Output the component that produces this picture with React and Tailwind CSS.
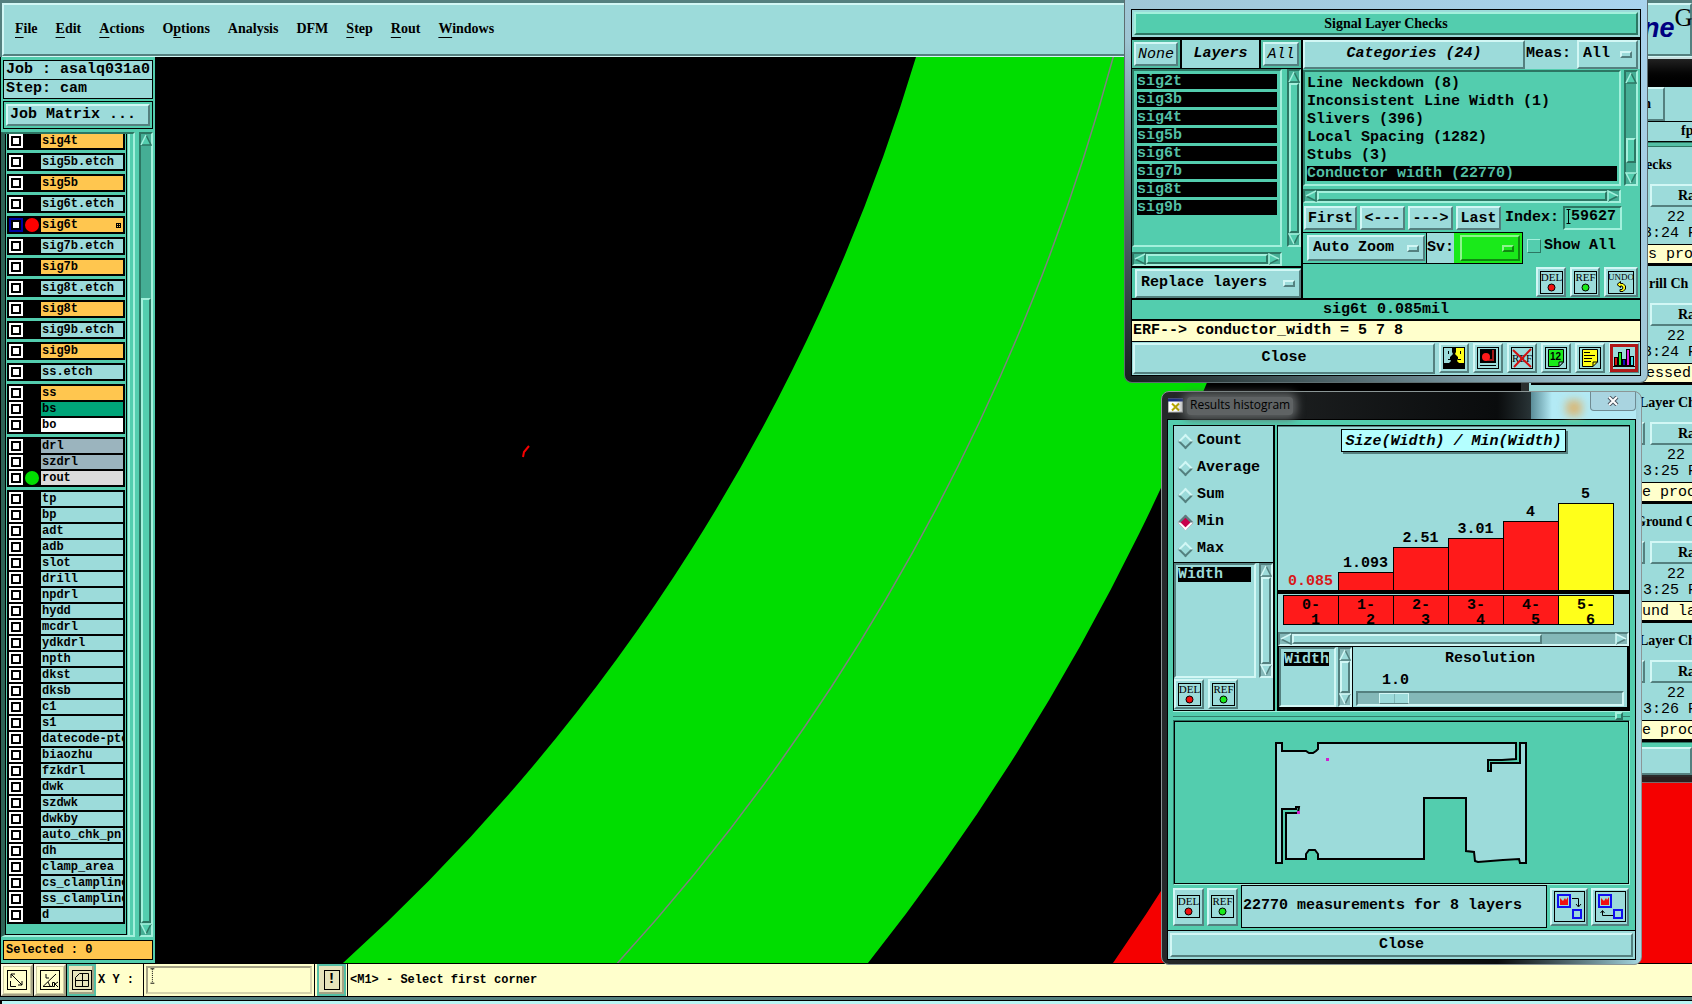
import React, { useState } from "react";
import clsx from "clsx";

const MONO = "font-['Liberation_Mono',monospace]";
const SERIF = "font-['Liberation_Serif',serif]";

const RAISED = "border-2 border-t-[#d2f7f5] border-l-[#d2f7f5] border-r-[#54807f] border-b-[#54807f] bg-[#9cdbda]";
const RAISED_TEAL = "border-2 border-t-[#a3f0dc] border-l-[#a3f0dc] border-r-[#2c7663] border-b-[#2c7663] bg-[#53cdae]";
const SUNK = "border-2 border-t-[#54807f] border-l-[#54807f] border-r-[#d2f7f5] border-b-[#d2f7f5] bg-[#9cdbda]";
const SUNK_TEAL = "border-2 border-t-[#2c7663] border-l-[#2c7663] border-r-[#a3f0dc] border-b-[#a3f0dc] bg-[#53cdae]";

const menus = [
  { key: "F", rest: "ile" },
  { key: "E", rest: "dit" },
  { key: "A", rest: "ctions" },
  { before: "O", key: "p", rest: "tions" },
  { rest: "Analysis" },
  { rest: "DFM" },
  { key: "S", rest: "tep" },
  { key: "R", rest: "out" },
  { key: "W", rest: "indows" },
];

const SIGNAL = "bg-[#ffc64f]";
const PLAIN = "bg-[#9cdbda]";

const layerGroups = [
  [{ name: "sig4t", bg: SIGNAL }],
  [{ name: "sig5b.etch", bg: PLAIN }],
  [{ name: "sig5b", bg: SIGNAL }],
  [{ name: "sig6t.etch", bg: PLAIN }],
  [{ name: "sig6t", bg: SIGNAL, dot: "bg-[#ff0000]", active: true }],
  [{ name: "sig7b.etch", bg: PLAIN }],
  [{ name: "sig7b", bg: SIGNAL }],
  [{ name: "sig8t.etch", bg: PLAIN }],
  [{ name: "sig8t", bg: SIGNAL }],
  [{ name: "sig9b.etch", bg: PLAIN }],
  [{ name: "sig9b", bg: SIGNAL }],
  [{ name: "ss.etch", bg: PLAIN }],
  [
    { name: "ss", bg: SIGNAL },
    { name: "bs", bg: "bg-[#00a479]" },
    { name: "bo", bg: "bg-white" },
  ],
  [
    { name: "drl", bg: "bg-[#9bb4be]" },
    { name: "szdrl", bg: "bg-[#9bb4be]" },
    { name: "rout", bg: "bg-[#dcdcdc]", dot: "bg-[#00dd00]" },
  ],
  [
    "tp", "bp", "adt", "adb", "slot", "drill", "npdrl", "hydd", "mcdrl", "ydkdrl", "npth", "dkst", "dksb", "c1", "s1",
    "datecode-pto", "biaozhu", "fzkdrl", "dwk", "szdwk", "dwkby", "auto_chk_pnl", "dh", "clamp_area", "cs_clampline",
    "ss_clampline", "d",
  ].map((name) => ({ name, bg: PLAIN })),
];

const checkLayers = ["sig2t", "sig3b", "sig4t", "sig5b", "sig6t", "sig7b", "sig8t", "sig9b"];

const categories = [
  "Line Neckdown (8)",
  "Inconsistent Line Width (1)",
  "Slivers (396)",
  "Local Spacing (1282)",
  "Stubs (3)",
  "Conductor width (22770)",
];

const bars = [
  { value: "0.085", height: 0, from: "0", to: "1", color: "bg-[#ff1a1a]" },
  { value: "1.093", height: 18, from: "1", to: "2", color: "bg-[#ff1a1a]" },
  { value: "2.51", height: 43, from: "2", to: "3", color: "bg-[#ff1a1a]" },
  { value: "3.01", height: 52, from: "3", to: "4", color: "bg-[#ff1a1a]" },
  { value: "4", height: 69, from: "4", to: "5", color: "bg-[#ff1a1a]" },
  { value: "5", height: 87, from: "5", to: "6", color: "bg-[#ffff1a]" },
];

const reports = [
  { title: "ecks", titlePad: "pl-[115px]", time: "3:24 P", text: "s proc", textPad: "pl-[117px]" },
  { title: "rill Ch", titlePad: "pl-[118px]", time: "3:24 P", text: "essed", textPad: "pl-[115px]" },
  { title: "Layer Ch", titlePad: "pl-[108px]", time: "3:25 P", text: "e proc", textPad: "pl-[111px]" },
  { title: "Ground C", titlePad: "pl-[104px]", time: "3:25 P", text: "und la", textPad: "pl-[111px]" },
  { title: "Layer Ch", titlePad: "pl-[108px]", time: "3:26 P", text: "e proc", textPad: "pl-[111px]" },
];

/* ---------- small parts ---------- */

const Arrow = ({ dir, teal }) => {
  const light = teal ? "#a3f0dc" : "#d2f7f5";
  const dark = teal ? "#2c7663" : "#54807f";
  const turn = { up: 0, right: 90, down: 180, left: 270 }[dir];
  const edges = {
    up: ["M1 11 L6 1", "M6 1 L11 11 H1"],
    left: ["M11 11 L6 1", "M6 1 L1 11 H11"],
    down: ["M6 1 L11 11 H1", "M1 11 L6 1"],
    right: ["M6 1 L1 11 H11", "M11 11 L6 1"],
  }[dir];
  return (
    <svg viewBox="0 0 12 12" className="size-3 shrink-0" fill="none" strokeWidth="1.5" aria-hidden="true">
      <g transform={`rotate(${turn} 6 6)`}>
        <path d="M6 1 L11 11 H1 Z" fill={teal ? "#53cdae" : "#9cdbda"} />
        <path d={edges[1]} stroke={dark} />
        <path d={edges[0]} stroke={light} />
      </g>
    </svg>
  );
};

const ScrollBar = ({ horizontal, teal, before = 0, thumb = 1, after = 0, className }) => (
  <div
    className={clsx(
      "flex items-center shrink-0",
      horizontal ? "h-[14px]" : "w-[14px] flex-col",
      teal
        ? "border-2 border-t-[#2c7663] border-l-[#2c7663] border-r-[#a3f0dc] border-b-[#a3f0dc] bg-[#45ae95]"
        : "border-2 border-t-[#54807f] border-l-[#54807f] border-r-[#d2f7f5] border-b-[#d2f7f5] bg-[#84b8b8]",
      className
    )}
  >
    <Arrow dir={horizontal ? "left" : "up"} teal={teal} />
    <div className={clsx("flex flex-1 self-stretch min-h-0", horizontal ? "flex-row" : "flex-col")}>
      <div className="basis-0" style={{ flexGrow: before }} />
      <div className={clsx("basis-0", teal ? RAISED_TEAL : RAISED)} style={{ flexGrow: thumb }} />
      <div className="basis-0" style={{ flexGrow: after }} />
    </div>
    <Arrow dir={horizontal ? "right" : "down"} teal={teal} />
  </div>
);

const Dropdown = ({ label, options, className, green }) => (
  <div
    className={clsx(
      "relative flex items-center",
      green
        ? "border-2 border-t-[#8df58d] border-l-[#8df58d] border-r-[#0f8a0f] border-b-[#0f8a0f] bg-[#1aea1a]"
        : RAISED,
      className
    )}
  >
    <select aria-label={label} className="w-full h-full appearance-none bg-transparent pl-1 text-[15px] font-bold outline-none">
      {options.map((opt) => (
        <option key={opt}>{opt}</option>
      ))}
    </select>
    <span
      className={clsx(
        "absolute right-1 w-3 h-[7px] pointer-events-none border-2",
        green
          ? "border-t-[#8df58d] border-l-[#8df58d] border-r-[#0f8a0f] border-b-[#0f8a0f]"
          : "border-t-[#d2f7f5] border-l-[#d2f7f5] border-r-[#54807f] border-b-[#54807f]"
      )}
    />
  </div>
);

const MarkIcon = ({ text, color }) => (
  <svg viewBox="0 0 23 23" className="size-[23px]" aria-hidden="true">
    <rect x="0.5" y="0.5" width="22" height="22" fill="none" stroke="#000" />
    <text x="11.5" y="10" textAnchor="middle" fontSize="11" fontWeight="400" fontFamily="Liberation Serif, serif">
      {text}
    </text>
    <circle cx="11.5" cy="16.5" r="3.5" fill={color} stroke="#000" />
  </svg>
);

const UndoIcon = () => (
  <svg viewBox="0 0 26 23" className="w-[26px] h-[23px]" aria-hidden="true">
    <rect x="0.5" y="0.5" width="25" height="22" fill="none" stroke="#000" />
    <text x="13" y="9" textAnchor="middle" fontSize="9" fontWeight="400" fontFamily="Liberation Serif, serif">
      UNDO
    </text>
    <path d="M9 13.5 L12.5 10.5 V12.5 H15 L17.5 15 V18 L15 20.5 H12 V18.5 H14 L15 17 L14 15 H12.5 V16.5 Z" fill="#ffff1a" stroke="#000" />
  </svg>
);

const IconButton = ({ label, className, children }) => (
  <button type="button" aria-label={label} className={clsx("flex items-center justify-center shrink-0", RAISED, className)}>
    {children}
  </button>
);

/* ---------- main window ---------- */

const MenuBar = () => (
  <header className="flex h-[57px] shrink-0 flex-col bg-[#54807f] pt-[3px]">
    <div className="ml-[2px] flex flex-1 items-center border-2 border-t-[#d2f7f5] border-l-[#d2f7f5] border-r-[#54807f] border-b-[#54807f] bg-[#9cdbda]">
      <nav className={clsx("flex gap-[18px] pb-[2px] pl-[11px]", SERIF)}>
        {menus.map(({ before, key, rest }) => (
          <button type="button" key={rest} className="text-sm font-bold leading-5">
            {before}
            {key && <span className="underline underline-offset-4">{key}</span>}
            {rest}
          </button>
        ))}
      </nav>
      <div className="-mr-[2px] ml-auto flex w-[49px] items-start overflow-hidden pb-2 whitespace-nowrap">
        <span className="pt-1 font-['Liberation_Sans',sans-serif] text-[27px] leading-8 font-bold italic text-[#000080]">ne</span>
        <span className={clsx("text-[25px] leading-5", SERIF)}>G</span>
      </div>
    </div>
    <div className="ml-[2px] h-[1px] bg-[#d2f7f5]" />
  </header>
);

const LayerRow = ({ name, bg, dot, active }) => (
  <li className="flex h-[14px]">
    <input
      type="checkbox"
      aria-label={name}
      className={clsx(
        "size-[14px] shrink-0 appearance-none border-2 bg-white shadow-[inset_0_0_0_2px_#000]",
        active ? "border-[#0000a0]" : "border-white"
      )}
    />
    <span className="flex w-[18px] shrink-0 items-center justify-center">
      {dot && <span className={clsx("size-[14px] rounded-full", dot)} />}
    </span>
    <button
      type="button"
      className={clsx("flex min-w-0 flex-1 items-center overflow-hidden pl-[1px] text-xs leading-[14px] font-bold whitespace-nowrap", bg)}
    >
      {name}
      {active && (
        <svg viewBox="0 0 5 5" className="mr-[2px] ml-auto size-[5px] shrink-0" aria-hidden="true">
          <path d="M0 0 H5 V5 H0 Z" />
          <path d="M1 1h1v1h-1z M3 1h1v1h-1z M1 3h1v1h-1z M3 3h1v1h-1z" fill="#ffc64f" />
        </svg>
      )}
    </button>
  </li>
);

const Sidebar = () => (
  <aside className={clsx("flex w-[155px] shrink-0 flex-col border-l border-black bg-[#53cdae] pt-[3px] pl-[2px] pr-[2px]", MONO)}>
    <div className="border border-black bg-[#9cdbda] pl-[2px] text-[15px] leading-[18px] font-bold whitespace-pre">Job : asalq031a0</div>
    <div className="border border-t-0 border-black bg-[#9cdbda] pl-[2px] text-[15px] leading-[18px] font-bold">Step: cam</div>
    <div className="mt-[2px] border border-black p-[2px]">
      <button type="button" className={clsx("block w-full pl-[2px] text-left text-[15px] leading-[18px] font-bold", RAISED)}>
        Job Matrix ...
      </button>
    </div>
    <div className="mt-[3px] flex min-h-0 flex-1">
      <div className="-ml-[2px] flex min-w-0 flex-1 border-2 border-l-4 border-t-[#2c7663] border-l-[#2f6457] border-r-[#a3f0dc] border-b-[#a3f0dc]">
        <ul className="flex min-w-0 flex-1 flex-col gap-[3px] overflow-hidden border border-t-0 border-black px-[1px]">
          {layerGroups.map((group, index) => (
            <li key={index}>
              <ul className={clsx("flex flex-col gap-[2px] bg-black px-[2px]", index > 0 ? "py-[2px]" : "pb-[2px]")}>
                {group.map((layer) => (
                  <LayerRow key={layer.name} {...layer} />
                ))}
              </ul>
            </li>
          ))}
        </ul>
        <div className="mr-[3px] w-[3px] border-r-2 border-[#a3f0dc]" />
      </div>
      <ScrollBar teal before={152} thumb={620} className="ml-[4px]" />
    </div>
    <div className="my-[3px] border border-black bg-[#ffc64f] pl-[2px] text-xs leading-[18px] font-bold">Selected : 0</div>
  </aside>
);

const Canvas = () => (
  <main className="min-w-0 flex-1 bg-black">
    <svg className="block h-full w-full" role="img" aria-label="Board artwork">
      <path d="M761 0 A1994 1994 0 0 1 188 906 H713 A2380 2380 0 0 0 1158 0 Z" fill="#00dd00" />
      <circle cx="-1154" cy="-567" r="2187" fill="none" stroke="#808080" strokeWidth="1.5" />
      <path d="M958 906 A2575 2575 0 0 0 1118 643 L1700 643 V906 Z" fill="#f50000" />
      <path d="M368 400 L369 395 L374 389" fill="none" stroke="#f50000" strokeWidth="2" />
    </svg>
  </main>
);

const toolBox = "flex w-[32px] items-center justify-center border-2 border-[#fdfbe4] border-r-[#a5a385] border-b-[#a5a385] bg-[#ffffcc] shadow-[inset_0_0_0_1px_#cfcda4]";
const tealTool = "flex w-[29px] items-center justify-center border-2 border-[#53bfa5] bg-[#e6e4bc] shadow-[inset_-2px_-2px_0_#a5a385]";

const CommandBar = () => (
  <footer className={clsx("shrink-0 text-xs font-bold", MONO)}>
    <div className="flex h-[34px] border-y border-l border-black bg-[#ffffcc]">
      <div className="flex gap-[1px] bg-black pr-[1px]">
        <button type="button" aria-label="Diagonal" className={toolBox}>
          <svg viewBox="0 0 20 20" className="size-5" fill="none" stroke="#000" aria-hidden="true">
            <rect x="0.5" y="0.5" width="19" height="19" />
            <path d="M4 4 L15 15 M4 8 V4 H8 M15 11 V15 H11 M3.500 11 V16.500 H9" />
          </svg>
        </button>
        <button type="button" aria-label="Angle" className={toolBox}>
          <svg viewBox="0 0 20 20" className="size-5" fill="none" stroke="#000" aria-hidden="true">
            <rect x="0.5" y="0.5" width="19" height="19" />
            <path d="M3 16.500 H12 M3 16.500 L16 4 M6 4 V8 H9 M8 12 L10 16 M12.500 12.500 h2 v4 h-2 z M15 14 L18 12 M15 14 L18 17" />
          </svg>
        </button>
      </div>
      <button type="button" aria-label="Grid" className={tealTool}>
        <svg viewBox="0 0 20 20" className="size-5" fill="none" stroke="#000" aria-hidden="true">
          <rect x="0.5" y="0.5" width="19" height="19" />
          <path d="M3.500 7.500 L7.500 3.500 H16.500 V16.500 H3.500 Z M10.500 3.500 V16.500 M3.500 10.500 H16.500" />
        </svg>
      </button>
      <label htmlFor="xy" className="flex w-[47px] items-center pl-[2px] whitespace-pre">
        X Y :
      </label>
      <div className="flex w-[172px] border-x border-black p-[2px]">
        <div className="flex flex-1 items-center border-2 border-t-[#a5a385] border-l-[#a5a385] border-r-[#d6d4ac] border-b-[#d6d4ac]">
          <svg viewBox="0 0 5 16" className="ml-[2px] h-4 w-[5px] self-start" fill="none" stroke="#000" aria-hidden="true">
            <path d="M0.500 0.500 H4.500 M0.500 15.500 H4.500" />
            <path d="M2.500 1 V15" strokeDasharray="1 1" />
          </svg>
          <input id="xy" type="text" className="w-full min-w-0 bg-transparent outline-none" />
        </div>
      </div>
      <button type="button" aria-label="Alert" className={clsx("ml-[2px]", tealTool)}>
        <span className="flex h-5 w-4 items-center justify-center border border-black text-[15px]">!</span>
      </button>
      <p className="ml-[1px] flex items-center border-l border-black pl-[2px]">&lt;M1&gt; - Select first corner</p>
    </div>
    <div className="h-[3px] bg-[#54807f]" />
    <div className="h-[4px] border-t border-l-2 border-black bg-[#b9f5f4]" />
  </footer>
);

/* ---------- window at the right edge ---------- */

const ReportWindow = () => (
  <section className="absolute top-[57px] right-0 left-[1521px] overflow-hidden whitespace-nowrap">
    <div className="h-[29px] border-t-2 border-[#c8dede] bg-linear-to-b from-[#222] to-black" />
    <div className="border-l-8 border-[#2b2f2f] bg-[#9cdbda] pl-[2px]">
      <div className="flex h-[36px] border-t border-b border-black">
        <button type="button" className={clsx("w-[134px] pr-3 text-right text-sm font-bold", SERIF, RAISED)}>
          n
        </button>
      </div>
      <p className={clsx("h-[20px] border-b border-black pl-[150px] text-sm leading-[18px] font-bold", SERIF)}>fp</p>
      <div className="h-[5px] border-y border-[#2c7663] bg-[#53bfa5]" />
      {reports.map((report, index) => (
        <article key={index} className="flex h-[119px] flex-col">
          <h3 className={clsx("h-[37px] text-sm leading-[35px] font-bold", SERIF, report.titlePad)}>{report.title}</h3>
          <div className="-mr-4 flex h-[23px] gap-[5px]">
            <div className={clsx("w-[114px]", RAISED)} />
            <button type="button" className={clsx("flex-1 pl-[26px] text-left text-sm leading-[19px] font-bold", SERIF, RAISED)}>
              Ra
            </button>
          </div>
          <div className={clsx("h-[37px] pt-[3px] text-[15px] leading-4", MONO)}>
            <p className="pl-[136px]">22</p>
            <p className="pl-[112px]">{report.time}</p>
          </div>
          <p className={clsx("h-[22px] border-t border-b-3 border-black bg-[#ffffcc] text-[15px] leading-5", MONO, report.textPad)}>{report.text}</p>
        </article>
      ))}
      <div className="h-[5px] border-t border-[#2c7663] bg-[#53cdae]" />
      <div className={clsx("h-[28px]", RAISED)} />
    </div>
    <div className="h-[8px] border-t-2 border-b border-[#2a2a2a] border-b-[#7a6a6a] bg-[#2b1f1f]" />
  </section>
);

/* ---------- signal layer checks ---------- */

const bottomIcons = [
  {
    label: "Compare",
    art: (
      <>
        <rect width="22" height="22" fill="#000" />
        <path d="M1 1 H9 V5 L10 7 L7 10 V12 L8 14 L6 16 H1 Z" fill="#9cdbda" />
        <path d="M21 1 H13 V5 L12 7 L15 10 V12 L14 14 L16 16 H21 Z" fill="#ffff1a" />
        <path d="M5 4h1v3h-1z M17 4h1v3h-1z M5 12h3v1h-3z M15 12h3v1h-3z" />
      </>
    ),
  },
  {
    label: "Stop view",
    art: (
      <>
        <rect x="0.5" y="0.5" width="21" height="21" fill="#9cdbda" stroke="#000" />
        <rect x="3" y="2" width="16" height="14" fill="#000" />
        <path d="M15 3 H17 V14 H11 V12 H15 Z" fill="#a01818" />
        <circle cx="9" cy="10" r="4" fill="#ff1a1a" />
        <path d="M3 18.500 H19" stroke="#000" />
      </>
    ),
  },
  {
    label: "Clear reference",
    art: (
      <>
        <rect x="0.5" y="0.5" width="21" height="21" fill="none" stroke="#000" />
        <text x="11" y="15" textAnchor="middle" fontSize="11" fontFamily="Liberation Serif, serif">
          REF
        </text>
        <path d="M2 3 L20 20 M20 2 L3 20" stroke="#d01010" strokeWidth="2" />
      </>
    ),
  },
  {
    label: "Numbered note",
    art: (
      <>
        <rect x="0.5" y="0.5" width="21" height="21" fill="none" stroke="#000" />
        <path d="M3.500 2.500 H18.500 V15 L14 19.500 H3.500 Z" fill="#1aea1a" stroke="#000" />
        <path d="M18.500 15 H14 V19.500 Z" fill="#9cdbda" stroke="#000" />
        <text x="10.500" y="13" textAnchor="middle" fontSize="10" fontWeight="700" fontFamily="Liberation Sans, sans-serif">
          12
        </text>
      </>
    ),
  },
  {
    label: "Notes",
    art: (
      <>
        <rect x="0.5" y="0.5" width="21" height="21" fill="none" stroke="#000" />
        <path d="M3.500 2.500 H18.500 V15 L14 19.500 H3.500 Z" fill="#ffff1a" stroke="#000" />
        <path d="M5 5.500 H11 M5 8.500 H16 M5 11.500 H13 M5 14.500 H12 M18.500 15 H14 V19.500" fill="none" stroke="#000" />
      </>
    ),
  },
  {
    label: "Histogram",
    art: (
      <>
        <path d="M0 19.500 H22" stroke="#000" />
        <g stroke="#000">
          <rect x="1.500" y="10.500" width="3" height="8" fill="#d01010" />
          <rect x="5.500" y="5.500" width="3" height="13" fill="#1aea1a" />
          <rect x="9.500" y="12.500" width="3" height="6" fill="#1010c0" />
          <rect x="13.500" y="2.500" width="3" height="16" fill="#e020e0" />
          <rect x="17.500" y="9.500" width="3" height="9" fill="#40e0e8" />
        </g>
      </>
    ),
  },
];

const SignalWindow = () => (
  <section
    className={clsx(
      "absolute top-0 left-[1124px] w-[524px] rounded-b-lg border border-t-0 border-[#5d6d70] bg-linear-to-bl from-[#a9d3ee] via-[#9fc6d4] via-55% to-[#16201f] px-[6px] pt-[9px] pb-[6px]",
      MONO
    )}
  >
    <div className="border border-black bg-[#9cdbda]">
      <div className="border-b-3 border-black">
        <h2 className={clsx("flex h-[27px] border-2 border-[#9cdbda] text-sm font-bold", SERIF)}>
          <span className={clsx("flex flex-1 items-center justify-center", RAISED_TEAL)}>Signal Layer Checks</span>
        </h2>
      </div>

      <div className="flex h-[258px]">
        {/* Layers */}
        <div className="flex w-[171px] shrink-0 flex-col border-r-2 border-black bg-[#53cdae]">
          <div className="flex h-[29px] shrink-0 gap-[2px] bg-black pb-[1px] text-[15px]">
            <div className="flex border-2 border-[#53bfa5]">
              <button type="button" className={clsx("w-[44px] text-center italic", RAISED)}>None</button>
            </div>
            <div className="flex flex-1 items-center justify-center bg-[#9cdbda] font-bold italic">Layers</div>
            <div className="flex border-2 border-[#53bfa5]">
              <button type="button" className={clsx("w-[36px] text-center italic", RAISED)}>All</button>
            </div>
          </div>
          <div className="flex h-[178px] shrink-0 gap-[5px]">
            <ul className={clsx("flex flex-1 flex-col gap-[3px] px-[3px] pt-[3px]", SUNK_TEAL)}>
              {checkLayers.map((name) => (
                <li key={name} className="h-[15px] bg-black text-[15px] leading-4 font-bold text-[#53bfa5]">{name}</li>
              ))}
            </ul>
            <ScrollBar teal />
          </div>
          <div className="mt-[5px] pr-[19px]">
            <ScrollBar horizontal teal />
          </div>
          <div className="mt-auto border-t-2 border-black py-[1px] pl-[3px]">
            <Dropdown label="Layer mode" options={["Replace layers"]} className="h-[29px]" />
          </div>
        </div>

        {/* Categories */}
        <div className="flex min-w-0 flex-1 flex-col bg-[#53cdae] text-[15px] font-bold">
          <div className="flex h-[29px]">
            <button type="button" className={clsx("w-[222px] text-center italic", RAISED)}>Categories (24)</button>
            <div className="flex flex-1 items-center justify-between bg-[#9cdbda] pr-[2px]">
              <span className="pl-[1px]">Meas:</span>
              <Dropdown label="Measurements" options={["All"]} className="h-full w-[61px]" />
            </div>
          </div>
          <div className="mt-[1px] flex h-[116px] gap-[3px] pr-[2px]">
            <ul className={clsx("flex-1 overflow-hidden pt-[2px] pr-[2px] pl-[2px]", SUNK_TEAL)}>
              {categories.map((name) => (
                <li key={name} className="h-[18px] pt-[2px]">
                  <span className={clsx("block h-[15px] leading-4", name.startsWith("Conductor") && "bg-black text-[#53bfa5]")}>{name}</span>
                </li>
              ))}
            </ul>
            <ScrollBar teal before={57} thumb={22} after={9} />
          </div>
          <div className="mt-[3px] pr-[19px]">
            <ScrollBar horizontal teal />
          </div>
          <div className="mt-[3px] flex h-6 items-stretch pl-[1px]">
            <button type="button" className={clsx("w-[53px]", RAISED)}>First</button>
            <button type="button" className={clsx("ml-[3px] w-[45px]", RAISED)}>&lt;---</button>
            <button type="button" className={clsx("ml-[3px] w-[45px]", RAISED)}>---&gt;</button>
            <button type="button" className={clsx("ml-[3px] w-[45px]", RAISED)}>Last</button>
            <label htmlFor="index" className="ml-[4px] flex items-center">Index:</label>
            <div className={clsx("ml-[4px] flex w-[59px] items-start pl-[1px]", SUNK_TEAL)}>
              <svg viewBox="0 0 5 15" className="mt-[1px] h-[15px] w-[5px] shrink-0" fill="none" stroke="#000" aria-hidden="true">
                <path d="M0.500 0.500 H4.500 M2.500 0 V15 M0.500 14.500 H4.500" />
              </svg>
              <input id="index" type="text" defaultValue="59627" className="w-full min-w-0 bg-transparent leading-[15px] outline-none" />
            </div>
          </div>
          <div className="mt-[2px] flex h-8">
            <div className="flex w-[220px] border-y border-r border-black">
              <div className="w-[124px] border-r border-black py-[2px] pr-[1px] pl-[4px]">
                <Dropdown label="Zoom mode" options={["Auto Zoom"]} className="h-full" />
              </div>
              <span className="flex w-[27px] items-center bg-[#9cdbda]">Sv:</span>
              <div className="flex-1 bg-[#1aea1a] py-[2px] pr-[2px] pl-[6px]">
                <Dropdown label="Severity" green options={[""]} className="h-full" />
              </div>
            </div>
            <label className="ml-[4px] flex items-start gap-[3px] pt-[6px] leading-4">
              <input
                type="checkbox"
                className="mt-[1px] size-[14px] appearance-none border border-t-[#a3f0dc] border-l-[#a3f0dc] border-r-[#2c7663] border-b-[#2c7663]"
              />
              Show All
            </label>
          </div>
          <div className="mt-[3px] flex justify-end gap-[4px] pr-[2px]">
            <IconButton label="Delete" className="size-[30px]"><MarkIcon text="DEL" color="#f01010" /></IconButton>
            <IconButton label="Reference" className="size-[30px]"><MarkIcon text="REF" color="#1aea1a" /></IconButton>
            <IconButton label="Undo" className="h-[30px] w-[34px]"><UndoIcon /></IconButton>
          </div>
        </div>
      </div>

      <p className="h-[23px] border-y-2 border-black bg-[#53cdae] text-center text-[15px] leading-5 font-bold">sig6t 0.085mil</p>
      <p className="h-[21px] border-b border-black bg-[#ffffcc] pl-[1px] text-[15px] leading-5 font-bold">ERF--&gt; conductor_width = 5 7 8</p>
      <div className="flex h-[33px] gap-[4px] p-[1px]">
        <button type="button" className={clsx("flex-1 text-center text-[15px] font-bold", RAISED)}>
          Close
        </button>
        {bottomIcons.map(({ label, art }) => (
          <IconButton key={label} label={label} className={clsx("size-[30px]", label === "Histogram" && "outline-3 -outline-offset-4 outline-[#b01818]")}>
            <svg viewBox="0 0 22 22" className="size-[22px]" aria-hidden="true">{art}</svg>
          </IconButton>
        ))}
      </div>
    </div>
  </section>
);

/* ---------- results histogram ---------- */

const BoardOutline = () => (
  <svg viewBox="0 0 252 122" className="block h-[122px] w-[252px]" role="img" aria-label="Measured board">
    <path
      d="M1 1 H7 V9 H31 L34 11 H38 L41 9 L43 7 V1 H241 V17 L227 18 H213 V29 H216 V21 H245 V1 H251 V121 H245 L244 117 L228 118 L203 120 L200 119 L199 110 L191 109 V56 H149 V117 H43 V112 L40 108 H34 L31 112 V117 H11 V71 H23 L24 65 H21 V67 H7 V121 H1 Z"
      fill="#9cdbda"
      stroke="#000"
      strokeWidth="2"
    />
    <path d="M51 16h3v3h-3z M22 69h3v3h-3z" fill="#d020d0" />
  </svg>
);

const TransferIcon = ({ back }) => (
  <svg viewBox="0 0 31 31" className="size-[31px]" fill="none" aria-hidden="true">
    <rect x="0.5" y="0.5" width="30" height="30" stroke="#000" />
    <rect x="4" y="4" width="12" height="12" fill="#9cdbda" stroke="#1010f0" strokeWidth="2" />
    <path d="M6 14 V7 L9 10 L11 7 L12 9 L14 6 V14 Z" fill="#f01010" />
    <rect x="19" y="19" width="8" height="8" stroke="#1010f0" strokeWidth="2" />
    {back ? (
      <path d="M18 24.500 H7.500 V20 M5.500 22 L7.500 19.500 L9.500 22" stroke="#000" />
    ) : (
      <path d="M18 7.500 H24.500 V15 M22 13 L24.500 16 L27 13" stroke="#000" />
    )}
  </svg>
);

const HistogramWindow = () => {
  const [mode, setMode] = useState("Min");

  return (
    <section className={clsx("absolute top-[391px] left-[1161px] w-[481px] rounded-lg border border-[#8b9696] bg-[#1c1e1f] bg-linear-to-r from-[#26292a] via-[#0a0c0d] via-70% to-[#a5d8e2] px-[5px] pb-[4px]", MONO)}>
      <div className="flex h-[27px] items-center">
        <svg viewBox="0 0 15 14" className="ml-[1px] size-[15px]" aria-hidden="true">
          <rect x="0.5" y="0.5" width="14" height="13" fill="#fff" stroke="#b8b8b8" />
          <rect width="15" height="3" fill="#1c2a80" />
          <path d="M4 5 L11 12 M11 5 L4 12" stroke="#b8a800" strokeWidth="2" />
        </svg>
        <h2 className="ml-[4px] rounded bg-[#5f6364] px-[3px] pb-[2px] font-['Open_Sans',sans-serif] text-xs leading-4 text-black shadow-[0_0_8px_4px_#5f6364]">Results histogram</h2>
        <div className="ml-auto flex h-full w-[105px] items-start justify-end bg-linear-to-r from-[#5b8d98] to-[#b3eaf5] to-20%">
          <span className="mt-2 mr-2 size-4 rounded bg-[#d8b878] blur-xs" />
          <button type="button" aria-label="Close window" className="flex h-[19px] w-[46px] items-center justify-center rounded-b border border-t-0 border-[#6f8b93] bg-[#a9d4e0]">
            <svg viewBox="0 0 12 10" className="h-[10px] w-3" aria-hidden="true">
              <path d="M2 1 L10 9 M10 1 L2 9" stroke="#4b5560" strokeWidth="4" />
              <path d="M2 1 L10 9 M10 1 L2 9" stroke="#fff" strokeWidth="2" />
            </svg>
          </button>
        </div>
      </div>

      <div className="border border-black bg-[#53cdae] text-[15px] font-bold">
        <div className="px-[5px] pt-[5px]">
          <div className="flex h-[286px] gap-[2px]">
            <div className="flex w-[102px] shrink-0 flex-col border border-r-2 border-black bg-[#9cdbda]">
              <fieldset className="flex h-[137px] shrink-0 flex-col border-b border-black pt-[1px]">
                {["Count", "Average", "Sum", "Min", "Max"].map((name) => (
                  <label key={name} className="flex h-[27px] items-center gap-[6px] pt-[1px] pl-[6px]">
                    <input
                      type="radio"
                      name="mode"
                      checked={mode === name}
                      onChange={() => setMode(name)}
                      className="size-[11px] shrink-0 rotate-45 appearance-none border-2 border-t-[#d2f7f5] border-l-[#d2f7f5] border-r-[#54807f] border-b-[#54807f] checked:border-t-[#54807f] checked:border-l-[#54807f] checked:border-r-white checked:border-b-white checked:bg-[#c8004c]"
                    />
                    {name}
                  </label>
                ))}
              </fieldset>
              <div className="flex h-[115px] gap-[3px]">
                <ul className={clsx("flex-1 p-[2px] pr-[3px]", SUNK)}>
                  <li className="h-[15px] bg-black leading-4 text-[#9cdbda]">Width</li>
                </ul>
                <ScrollBar />
              </div>
              <div className="mt-[1px] flex gap-[4px]">
                <IconButton label="Delete width" className="size-[30px]"><MarkIcon text="DEL" color="#f01010" /></IconButton>
                <IconButton label="Reference width" className="size-[30px]"><MarkIcon text="REF" color="#1aea1a" /></IconButton>
              </div>
            </div>

            <div className="flex min-w-0 flex-1 flex-col border border-black bg-[#9cdbda]">
              <div className="flex h-[164px] flex-col items-center border-t border-[#54807f] pt-[2px]">
                <h3 className="border border-black bg-[#b4ffff] px-[3px] pt-[2px] leading-[19px] italic shadow-[2px_2px_0_#54807f]">Size(Width) / Min(Width)</h3>
                <div className="flex w-full flex-1 items-end pl-[5px]">
                  {bars.map((bar) => (
                    <div key={bar.value} className="flex w-[55px] flex-col items-center">
                      <span className={clsx("leading-4", bar.height === 0 && "text-[#d81818]")}>{bar.value}</span>
                      <div className={clsx("w-full", bar.height > 0 && "border border-r-0 border-b-0 border-black", bar.color)} style={{ height: bar.height }} />
                    </div>
                  ))}
                  <div className="h-[87px] w-[1px] bg-black" />
                </div>
              </div>
              <div className="h-[4px] shrink-0 bg-black" />
              <ul className="mt-[1px] ml-[5px] flex h-[30px] w-[331px] shrink-0 border border-l-0 border-black">
                {bars.map((bar) => (
                  <li key={bar.from} className={clsx("w-[55px] border-l border-black pt-[2px] leading-[15px] whitespace-pre", bar.color)}>
                    <span className="block pl-[18px]">{bar.from}-</span>
                    <span className="block pl-[27px]">{bar.to}</span>
                  </li>
                ))}
              </ul>
              <ScrollBar horizontal thumb={250} after={74} className="mt-[7px]" />
              <div className="flex min-h-0 flex-1 border border-r-2 border-b-3 border-black">
                <ul className={clsx("w-[57px] px-[3px] pt-[3px]", SUNK)}>
                  <li className="h-[14px] w-[45px] bg-black leading-4 text-[#9cdbda]">Width</li>
                </ul>
                <ScrollBar className="ml-[2px]" />
                <div className="flex flex-1 flex-col border-l border-black px-[3px]">
                  <label htmlFor="resolution" className="pt-[2px] text-center leading-5">Resolution</label>
                  <output htmlFor="resolution" className="mt-[2px] pl-[26px] leading-5">1.0</output>
                  <input
                    id="resolution"
                    type="range"
                    defaultValue="9"
                    className={clsx(
                      "mt-auto mb-[2px] h-[15px] w-full appearance-none border-2 border-t-[#54807f] border-l-[#54807f] border-r-[#d2f7f5] border-b-[#d2f7f5] bg-[#84b8b8]",
                      "[&::-webkit-slider-thumb]:h-[11px] [&::-webkit-slider-thumb]:w-[30px] [&::-webkit-slider-thumb]:appearance-none [&::-webkit-slider-thumb]:border [&::-webkit-slider-thumb]:border-[#d2f7f5] [&::-webkit-slider-thumb]:border-b-[#54807f] [&::-webkit-slider-thumb]:bg-linear-to-r [&::-webkit-slider-thumb]:from-[#9cdbda] [&::-webkit-slider-thumb]:from-49% [&::-webkit-slider-thumb]:via-[#54807f] [&::-webkit-slider-thumb]:via-50% [&::-webkit-slider-thumb]:to-[#9cdbda] [&::-webkit-slider-thumb]:to-53%"
                    )}
                  />
                </div>
              </div>
            </div>
          </div>

          {/* Sash between the two panes */}
          <div className="flex h-[9px] items-center justify-end border-t border-[#a3f0dc] bg-linear-to-b from-[#53cdae] from-45% via-[#2c7663] via-55% to-[#53cdae] to-65% pr-[7px]">
            <span className={clsx("size-[8px]", RAISED_TEAL)} />
          </div>

          <div className="border border-t-[#2c7663] border-l-[#2c7663] border-r-[#a3f0dc] border-b-[#a3f0dc]">
            <div className="flex h-[163px] justify-center border border-black pt-[20px] pr-[2px]">
              <BoardOutline />
            </div>
          </div>

          <div className="flex h-[43px] items-center gap-[3px] pr-[1px]">
            <IconButton label="Delete results" className="h-[38px] w-[31px]"><MarkIcon text="DEL" color="#f01010" /></IconButton>
            <IconButton label="Reference results" className="h-[38px] w-[31px]"><MarkIcon text="REF" color="#1aea1a" /></IconButton>
            <p className="flex h-full flex-1 items-center border border-black bg-[#9cdbda] pl-[1px]">22770 measurements for 8 layers</p>
            <IconButton label="Move forward" className="size-[38px]"><TransferIcon /></IconButton>
            <IconButton label="Move back" className="size-[38px]"><TransferIcon back /></IconButton>
          </div>
        </div>
        <div className="mt-[2px] border-t border-black bg-[#9cdbda] px-[2px] py-[2px]">
          <button type="button" className={clsx("block h-6 w-full text-center leading-5", RAISED)}>Close</button>
        </div>
      </div>
    </section>
  );
};

export default function App() {
  return (
    <div className="relative flex h-screen flex-col overflow-hidden bg-black text-black">
      <MenuBar />
      <div className="flex min-h-0 flex-1">
        <Sidebar />
        <Canvas />
      </div>
      <CommandBar />
      <ReportWindow />
      <SignalWindow />
      <HistogramWindow />
    </div>
  );
}
